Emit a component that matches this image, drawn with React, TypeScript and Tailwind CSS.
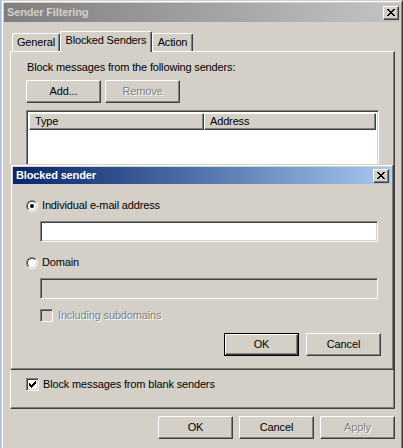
import React from "react";

const raised =
  "border border-t-white border-l-white border-r-[#404040] border-b-[#404040] shadow-[inset_-1px_-1px_0_#808080]";
const sunken =
  "border border-t-[#808080] border-l-[#808080] border-r-white border-b-white shadow-[inset_1px_1px_0_#404040,inset_-1px_-1px_0_#d4d0c8]";
const disabledText = "text-[#808080] [text-shadow:1px_1px_0_#ffffff]";

function XGlyph() {
  const rows = [
    [0, 1, 6, 7],
    [1, 2, 5, 6],
    [2, 3, 4, 5],
    [3, 4],
    [2, 3, 4, 5],
    [1, 2, 5, 6],
    [0, 1, 6, 7],
  ];
  return (
    <svg width="8" height="7" viewBox="0 0 8 7" shapeRendering="crispEdges">
      {rows.map((r, y) =>
        r.map((x) => <rect key={`${x}-${y}`} x={x} y={y} width="1" height="1" fill="#000" />)
      )}
    </svg>
  );
}

function CheckGlyph() {
  const rows = [
    [6],
    [5, 6],
    [0, 4, 5, 6],
    [0, 1, 3, 4, 5],
    [0, 1, 2, 3, 4],
    [1, 2, 3],
    [2],
  ];
  return (
    <svg width="7" height="7" viewBox="0 0 7 7" shapeRendering="crispEdges">
      {rows.map((r, y) =>
        r.map((x) => <rect key={`${x}-${y}`} x={x} y={y} width="1" height="1" fill="#000" />)
      )}
    </svg>
  );
}

function CloseBtn() {
  return (
    <div className={`w-[16px] h-[14px] bg-[#d4d0c8] flex items-center justify-center ${raised}`}>
      <XGlyph />
    </div>
  );
}

function Btn({
  children,
  disabled,
  def,
}: {
  children: React.ReactNode;
  disabled?: boolean;
  def?: boolean;
}) {
  if (def) {
    return (
      <div className="w-[75px] h-[23px] border border-black">
        <div className={`w-full h-full bg-[#d4d0c8] flex items-center justify-center ${raised}`}>
          {children}
        </div>
      </div>
    );
  }
  return (
    <div
      className={`w-[75px] h-[23px] bg-[#d4d0c8] flex items-center justify-center ${raised} ${
        disabled ? disabledText : ""
      }`}
    >
      {children}
    </div>
  );
}

function Radio({ checked }: { checked?: boolean }) {
  return (
    <div className="w-[12px] h-[12px] rounded-full border border-t-[#808080] border-l-[#808080] border-r-white border-b-white">
      <div className="w-full h-full rounded-full bg-white border border-t-[#404040] border-l-[#404040] border-r-[#d4d0c8] border-b-[#d4d0c8] flex items-center justify-center">
        {checked && <div className="w-[4px] h-[4px] rounded-full bg-black" />}
      </div>
    </div>
  );
}

function Check({ checked, disabled }: { checked?: boolean; disabled?: boolean }) {
  return (
    <div
      className={`w-[13px] h-[13px] flex items-center justify-center ${sunken} ${
        disabled ? "bg-[#d4d0c8]" : "bg-white"
      }`}
    >
      {checked && <CheckGlyph />}
    </div>
  );
}

function Tab({
  label,
  w,
  selected,
}: {
  label: string;
  w: string;
  selected?: boolean;
}) {
  return (
    <div
      className={`${w} ${
        selected ? "h-[21px] -mb-px relative z-10" : "h-[18px]"
      } bg-[#d4d0c8] border-l border-t border-r border-l-white border-t-white border-r-[#404040] shadow-[inset_-1px_0_0_#808080] rounded-t-[2px] flex items-start justify-center pt-[2px]`}
    >
      {label}
    </div>
  );
}

export default function App() {
  return (
    <div className="relative w-[403px] h-[448px] overflow-hidden flex bg-[#a9bfdc] font-['Liberation_Sans',Arial,sans-serif] text-[11px] leading-[13px] tracking-[-0.15px] text-black">
      <div className="ml-px flex-1 h-[452px] border border-t-[#d4d0c8] border-l-[#d4d0c8] border-r-[#404040] border-b-[#404040]">
        <div className="h-full border border-t-white border-l-white border-r-[#808080] border-b-[#808080] bg-[#d4d0c8] p-px flex flex-col">
          {/* Title bar */}
          <div className="h-[19px] flex items-center justify-between pl-[3px] pr-[1px] bg-gradient-to-r from-[#7f7f7f] to-[#c4c4c4]">
            <span className="font-bold text-[#d4d0c8]">Sender Filtering</span>
            <CloseBtn />
          </div>

          {/* Body */}
          <div className="flex flex-col pl-[6px] pr-[5px] pt-[9px]">
            <div className="h-[20px] flex items-end pl-[2px]">
              <Tab label="General" w="w-[48px]" />
              <Tab label="Blocked Senders" w="w-[92px]" selected />
              <Tab label="Action" w="w-[41px]" />
            </div>

            <div className="h-[358px] w-[385px] border border-t-white border-l-white border-r-[#404040] border-b-[#404040] shadow-[inset_-1px_-1px_0_#808080] flex flex-col pt-[9px] pl-[15px]">
              <div className="ml-px h-[13px]">Block messages from the following senders:</div>
              <div className="mt-[6px] flex gap-[4px]">
                <Btn>Add...</Btn>
                <Btn disabled>Remove</Btn>
              </div>
              <div className={`mt-[7px] w-[353px] h-[255px] bg-white p-[2px] ${sunken}`}>
                <div className="flex h-[17px]">
                  <div className={`w-[175px] h-full bg-[#d4d0c8] pl-[5px] flex items-center ${raised}`}>
                    Type
                  </div>
                  <div className={`flex-1 h-full bg-[#d4d0c8] pl-[5px] flex items-center ${raised}`}>
                    Address
                  </div>
                </div>
              </div>
              <div className="mt-[13px] flex items-center gap-[4px]">
                <Check checked />
                <span>Block messages from blank senders</span>
              </div>
            </div>

            <div className="mt-[7px] flex justify-end gap-[6px]">
              <Btn>OK</Btn>
              <Btn>Cancel</Btn>
              <Btn disabled>Apply</Btn>
            </div>
          </div>
        </div>
      </div>

      {/* Inner dialog */}
      <div className="absolute left-[10px] top-[164px] w-[384px] h-[206px] border border-t-[#d4d0c8] border-l-[#d4d0c8] border-r-[#404040] border-b-[#404040]">
        <div className="h-full border border-t-white border-l-white border-r-[#808080] border-b-[#808080] bg-[#d4d0c8] p-px flex flex-col">
          <div className="h-[17px] flex items-center justify-between pl-[3px] pr-[2px] bg-gradient-to-r from-[#0a246a] to-[#a6caf0]">
            <span className="font-bold text-white">Blocked sender</span>
            <CloseBtn />
          </div>
          <div className="flex flex-col pl-[13px]">
            <div className="mt-[15px] h-[13px] flex items-center gap-[4px]">
              <Radio checked />
              <span>Individual e-mail address</span>
            </div>
            <div className={`mt-[9px] ml-[14px] w-[338px] h-[21px] bg-white ${sunken}`} />
            <div className="mt-[14px] h-[13px] flex items-center gap-[4px]">
              <Radio />
              <span>Domain</span>
            </div>
            <div className={`mt-[9px] ml-[14px] w-[338px] h-[21px] bg-[#d4d0c8] ${sunken}`} />
            <div className="mt-[10px] ml-[14px] h-[13px] flex items-center gap-[5px]">
              <Check disabled />
              <span className={disabledText}>Including subdomains</span>
            </div>
            <div className="mt-[11px] flex justify-end gap-[7px] pr-[10px]">
              <Btn def>OK</Btn>
              <Btn>Cancel</Btn>
            </div>
          </div>
        </div>
      </div>
    </div>
  );
}
